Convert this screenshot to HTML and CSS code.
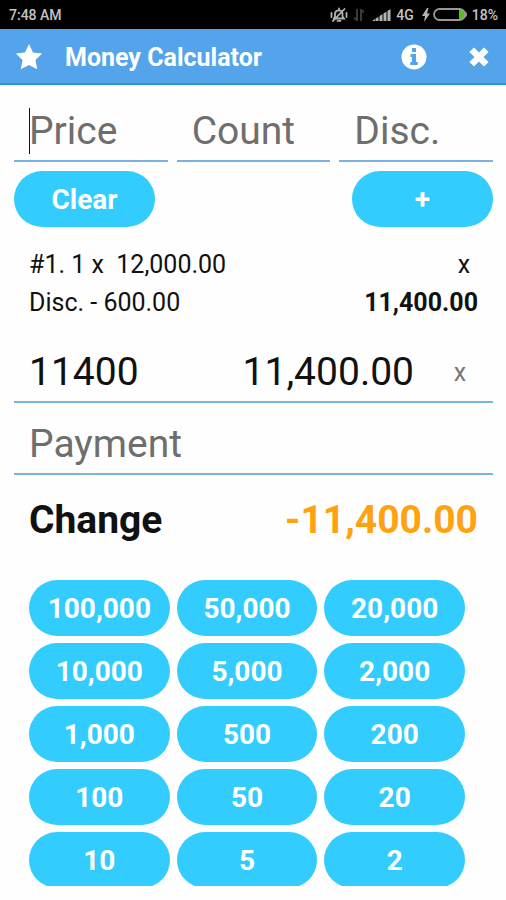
FILE: index.html
```
<!DOCTYPE html>
<html lang="en">
<head>
<meta charset="utf-8">
<meta name="viewport" content="width=device-width, initial-scale=1">
<title>Money Calculator</title>
<link rel="stylesheet" href="styles.css">
</head>
<body>
<div class="status">
  <span>7:48 AM</span>
  <div class="status-icons">
    <svg width="18" height="16" viewBox="0 0 18 16" fill="none" stroke="#b4b4b4" stroke-width="1.800" stroke-linecap="round" aria-hidden="true">
      <path d="M4 11.500h10l-1.500-2V6.500a3.800 3.800 0 0 0-7.500 0v3zM7.500 13.800h3M3 14L14.500 2M1.500 6v4M16.500 6v4M9 1.500v1"/>
    </svg>
    <svg class="arrows" width="12" height="14" viewBox="0 0 12 14" fill="none" stroke="#3a3a3a" stroke-width="2" aria-hidden="true">
      <path d="M4 1v12M1 9.500l3 3M8 13V1M8 1.500l3 3"/>
    </svg>
    <svg class="signal" width="19" height="12" viewBox="0 0 19 12" fill="#b4b4b4" aria-hidden="true">
      <path d="M0 12l3-2v2zM3.500 9.500l3-1.500v4h-3zM7.500 7l3-2v7h-3zM11.500 4.500l3-2V12h-3zM15.500 2l3-2v12h-3z"/>
    </svg>
    <span>4G</span>
    <svg class="bolt" width="8" height="14" viewBox="0 0 8 14" fill="#b4b4b4" aria-hidden="true">
      <path d="M5 0L0 8h3l-1 6 6-8.500H5L6.500 0z"/>
    </svg>
    <svg width="35" height="13" viewBox="0 0 35 13" aria-hidden="true">
      <path d="M26 2h3a4 4 0 0 1 0 9h-3z" fill="#4fc414"/>
      <rect x="1" y="1" width="31" height="11" rx="5.500" fill="none" stroke="#999" stroke-width="1.800"/>
      <path d="M33 4q2 2.500 0 5z" fill="#999"/>
    </svg>
    <span class="percent">18%</span>
  </div>
</div>

<header class="bar">
  <button class="icon" type="button" aria-label="Rate">
    <svg width="28" height="28" viewBox="0 0 28 28" fill="#fff"><path d="M14 1l4 8.400 9.200 1.200-6.700 6.400 1.700 9.300L14 21.900l-8.200 4.400L7.500 17 .8 10.600 10 9.400z"/></svg>
  </button>
  <h1>Money Calculator</h1>
  <button class="icon" type="button" aria-label="About">
    <svg width="26" height="26" viewBox="0 0 26 26"><circle cx="13" cy="13" r="12.500" fill="#fff"/><path fill="#53a4ea" d="M11 4h4v4h-4zM9.500 10H15v8h1.800v3H9.200v-3H11v-5H9.500z"/></svg>
  </button>
  <button class="icon" type="button" aria-label="Close">
    <svg width="20" height="20" viewBox="0 0 20 20" fill="none" stroke="#fff" stroke-width="6.500" stroke-linecap="square"><path d="M5 5l10 10M15 5L5 15"/></svg>
  </button>
</header>

<main>
  <div class="fields">
    <div class="field active"><input type="text" inputmode="decimal" placeholder="Price" aria-label="Price"></div>
    <div class="field"><input type="text" inputmode="numeric" placeholder="Count" aria-label="Count"></div>
    <div class="field"><input type="text" inputmode="decimal" placeholder="Disc." aria-label="Discount"></div>
  </div>
  <div class="actions">
    <button class="pill" type="button">Clear</button>
    <button class="pill" type="button">+</button>
  </div>

  <div class="item">
    <div class="line"><span class="entry">#1. 1 x  12,000.00</span><button class="remove" type="button">x</button></div>
    <div class="line"><span>Disc. - 600.00</span><strong>11,400.00</strong></div>
  </div>

  <div class="field total">
    <input type="text" value="11400" aria-label="Total">
    <output>11,400.00</output>
    <button class="remove" type="button">x</button>
  </div>
  <div class="field payment"><input type="text" inputmode="decimal" placeholder="Payment" aria-label="Payment"></div>

  <div class="change"><span>Change</span><output>-11,400.00</output></div>

  <div class="keypad">
    <button class="pill" type="button">100,000</button>
    <button class="pill" type="button">50,000</button>
    <button class="pill" type="button">20,000</button>
    <button class="pill" type="button">10,000</button>
    <button class="pill" type="button">5,000</button>
    <button class="pill" type="button">2,000</button>
    <button class="pill" type="button">1,000</button>
    <button class="pill" type="button">500</button>
    <button class="pill" type="button">200</button>
    <button class="pill" type="button">100</button>
    <button class="pill" type="button">50</button>
    <button class="pill" type="button">20</button>
    <button class="pill" type="button">10</button>
    <button class="pill" type="button">5</button>
    <button class="pill" type="button">2</button>
  </div>
</main>
</body>
</html>
```
FILE: styles.css
```
* {
  box-sizing: border-box;
}

body {
  margin: 0;
  height: 100vh;
  display: flex;
  flex-direction: column;
  background: #fefefe;
  color: #111;
  font-family: Roboto, "Liberation Sans", sans-serif;
}

button,
input {
  margin: 0;
  padding: 0;
  border: 0;
  background: none;
  color: inherit;
  font: inherit;
}

svg {
  display: block;
}

.status {
  display: flex;
  align-items: center;
  justify-content: space-between;
  height: 29px;
  padding: 0 8px 0 9px;
  background: #000;
  color: #c4c4c4;
  font-size: 14px;
  font-weight: 500;
}

.status-icons {
  display: flex;
  align-items: center;
}

.arrows {
  margin: 0 7px 0 5px;
}

.signal {
  margin-right: 5px;
}

.bolt {
  margin: 0 3px 0 8px;
}

.percent {
  margin-left: 4px;
}

.bar {
  display: flex;
  align-items: center;
  height: 56px;
  padding: 2px 17px 0 15px;
  border-bottom: 2px solid #2b92e4;
  background: #53a4ea;
  color: #fff;
}

.bar h1 {
  flex: 1;
  margin: 0 0 0 22px;
  font-size: 25px;
  font-weight: 700;
}

.bar .icon + .icon {
  margin-left: 42px;
}

main {
  flex: 1;
  min-height: 0;
  display: flex;
  flex-direction: column;
  padding: 15px 13px 14px 14px;
}

.fields {
  display: grid;
  grid-template-columns: repeat(3, minmax(0, 1fr));
  gap: 9px;
}

.field {
  position: relative;
  display: flex;
  align-items: center;
  padding: 2px 15px 0;
  border-bottom: 2px solid #7ab2e6;
  font-size: 39px;
}

.field input {
  flex: 1;
  min-width: 0;
  width: 100%;
  height: 58px;
}

.field input::placeholder {
  color: #6e6e6e;
  opacity: 1;
}

.field.active::before {
  content: "";
  position: absolute;
  left: 15px;
  top: 8px;
  width: 1px;
  height: 46px;
  background: #111;
}

.actions {
  display: flex;
  justify-content: space-between;
  margin-top: 9px;
}

.pill {
  height: 56px;
  border-radius: 28px;
  background: #33ccff;
  color: #fff;
  font-size: 28px;
  font-weight: 700;
  text-align: center;
}

.actions .pill {
  width: 141px;
}

.item {
  padding: 18px 15px 0;
  font-size: 25px;
}

.line {
  display: flex;
  align-items: center;
  justify-content: space-between;
  height: 38px;
}

.entry {
  white-space: pre;
}

.remove {
  width: 28px;
  font-size: 25px;
}

.total {
  margin-top: 20px;
}

.total .remove {
  margin: 0 4px 0 32px;
  color: #777;
}

.payment {
  margin-top: 10px;
}

.change {
  display: flex;
  justify-content: space-between;
  padding: 0 15px;
  margin: 21px 0 36px;
  font-size: 39px;
  line-height: 48px;
  font-weight: 700;
}

.change output {
  color: #ffa210;
}

.keypad {
  flex: 1;
  min-height: 0;
  overflow: hidden;
  display: grid;
  grid-template-columns: repeat(3, minmax(0, 1fr));
  grid-auto-rows: 56px;
  align-content: start;
  gap: 7px;
  padding: 0 28px 0 15px;
}
```
